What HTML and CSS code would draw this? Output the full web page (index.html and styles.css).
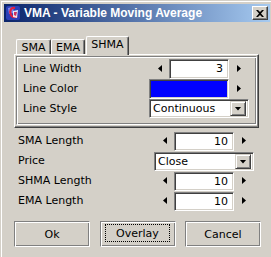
FILE: index.html
```html
<!DOCTYPE html>
<html lang="en">
<head>
  <meta charset="UTF-8" />
  <title>VMA - Variable Moving Average</title>
  <link rel="stylesheet" href="styles.css">
</head>
<body>
  <div class="window">
    <!-- Caption -->
    <div class="titlebar">
      <svg class="app-icon" width="16" height="16" viewBox="0 0 16 16">
        <rect x="1" y="1" width="14" height="14" rx="2" fill="#2b3fb8"/>
        <path d="M3 3 L8 2 L9 8 L4 9 Z" fill="#7a8cf0"/>
        <path d="M10 3 C6 2 4 6 6 10 C7 12 10 13 12 11" fill="none" stroke="#e02040" stroke-width="2.2"/>
        <path d="M8 6 L13 5 L12 13 L8 12 Z" fill="#ffffff" opacity="0.85"/>
        <path d="M9 7 L12 7 L11 11 L9 10 Z" fill="#d03060"/>
      </svg>
      <span class="title">VMA - Variable Moving Average</span>
      <span class="close-btn">
        <svg width="8" height="7" viewBox="0 0 8 7">
          <path d="M0 0 L2 0 L4 2 L6 0 L8 0 L5 3.5 L8 7 L6 7 L4 5 L2 7 L0 7 L3 3.5 Z" fill="#000"/>
        </svg>
      </span>
    </div>

    <div class="content">
      <!-- Tabs -->
      <div class="tabs">
        <div class="tab tab-sma">SMA</div>
        <div class="tab tab-ema">EMA</div>
        <div class="tab tab-shma active">SHMA</div>
      </div>

      <div class="panel">
        <div class="frame">
          <div class="row">
            <span class="label">Line Width</span>
            <div class="spin">
              <span class="arrow-box"><span class="arrow left"></span></span>
              <span class="field num">3</span>
              <span class="arrow-box right-box"><span class="arrow right"></span></span>
            </div>
          </div>
          <div class="row">
            <span class="label">Line Color</span>
            <div class="spin">
              <span class="field swatch"></span>
              <span class="arrow-box right-box"><span class="arrow right"></span></span>
            </div>
          </div>
          <div class="row">
            <span class="label">Line Style</span>
            <div class="combo">
              <span class="combo-text">Continuous</span>
              <span class="combo-btn"><span class="arrow down"></span></span>
            </div>
          </div>
        </div>
      </div>

      <!-- Common params -->
      <div class="params">
        <div class="row">
          <span class="label">SMA Length</span>
          <div class="spin">
            <span class="arrow-box"><span class="arrow left"></span></span>
            <span class="field num">10</span>
            <span class="arrow-box right-box"><span class="arrow right"></span></span>
          </div>
        </div>
        <div class="row">
          <span class="label">Price</span>
          <div class="combo">
            <span class="combo-text">Close</span>
            <span class="combo-btn"><span class="arrow down"></span></span>
          </div>
        </div>
        <div class="row">
          <span class="label">SHMA Length</span>
          <div class="spin">
            <span class="arrow-box"><span class="arrow left"></span></span>
            <span class="field num">10</span>
            <span class="arrow-box right-box"><span class="arrow right"></span></span>
          </div>
        </div>
        <div class="row">
          <span class="label">EMA Length</span>
          <div class="spin">
            <span class="arrow-box"><span class="arrow left"></span></span>
            <span class="field num">10</span>
            <span class="arrow-box right-box"><span class="arrow right"></span></span>
          </div>
        </div>
      </div>

      <div class="buttons">
        <div class="btn">Ok</div>
        <div class="btn focused"><span class="focus">Overlay</span></div>
        <div class="btn">Cancel</div>
      </div>
    </div>
  </div>
</body>
</html>
```

FILE: styles.css
```css
body {
  margin: 0;
  background: #d4d0c8;
  font-family: "DejaVu Sans", sans-serif;
  font-size: 11px;
  color: #000;
}

.window {
  margin: 1px 0 0 1px;
  border-top: 1px solid #fff;
  border-left: 1px solid #fff;
  padding: 2px 1px 0 2px;
  height: 256px;
  box-sizing: border-box;
}

/* caption */
.titlebar {
  height: 18px;
  display: flex;
  align-items: center;
  padding-left: 1px;
  background: linear-gradient(to right, #0a246a, #a6caf0);
  color: #fff;
}

.app-icon {
  flex: none;
}

.title {
  margin-left: 3px;
  font-family: "Liberation Sans", sans-serif;
  font-weight: bold;
  font-size: 12px;
  white-space: nowrap;
}

.close-btn {
  margin-left: auto;
  margin-right: 2px;
  width: 16px;
  height: 14px;
  box-sizing: border-box;
  display: flex;
  align-items: center;
  justify-content: center;
  background: #d4d0c8;
  border: 1px solid;
  border-color: #fff #404040 #404040 #fff;
  box-shadow: inset -1px -1px #808080;
}

.content {
  padding-left: 10px;
}

/* tabs */
.tabs {
  display: flex;
  align-items: flex-end;
  height: 18px;
  margin-top: 14px;
  padding-left: 2px;
  position: relative;
  z-index: 1;
}

.tab {
  height: 15px;
  box-sizing: border-box;
  padding-top: 1px;
  line-height: 13px;
  text-align: center;
  border-top: 1px solid #fff;
  border-left: 1px solid #fff;
  border-right: 1px solid #404040;
  border-radius: 2px 2px 0 0;
  box-shadow: inset -1px 0 #808080;
  background: #d4d0c8;
}

.tab-sma { width: 35px; }
.tab-ema { width: 34px; }

.tab-shma {
  width: 43px;
  margin-left: 1px;
}

.tab.active {
  height: 19px;
  margin-bottom: -1px;
}

.panel {
  width: 245px;
  height: 74px;
  box-sizing: border-box;
  padding: 1px;
  border-top: 1px solid #fff;
  border-left: 1px solid #fff;
  border-right: 1px solid #404040;
  border-bottom: 1px solid #404040;
  box-shadow: inset -1px -1px #808080;
}

.frame {
  height: 69px;
  box-sizing: border-box;
  border: 1px solid;
  border-color: #808080 #fff #fff #808080;
  box-shadow: inset 1px 1px #fff, inset -1px -1px #808080;
  padding: 1px 0 0 1px;
}

/* rows */
.row {
  display: grid;
  grid-template-columns: 131px 100px;
  height: 20px;
  align-items: center;
}

.label {
  padding-left: 5px;
  line-height: 20px;
  padding-top: 1px;
}

.spin {
  display: flex;
  align-items: center;
  height: 20px;
}

.arrow-box {
  width: 20px;
  height: 20px;
  display: flex;
  align-items: center;
  padding-left: 9px;
  box-sizing: border-box;
}

.right-box {
  padding-left: 8px;
}

.arrow {
  display: block;
  background: #000;
}

.arrow.left {
  width: 4px;
  height: 7px;
  clip-path: polygon(100% 0, 0 50%, 100% 100%);
}

.arrow.right {
  width: 4px;
  height: 7px;
  clip-path: polygon(0 0, 100% 50%, 0 100%);
}

.arrow.down {
  width: 7px;
  height: 4px;
  clip-path: polygon(0 0, 100% 0, 50% 100%);
}

.field {
  height: 20px;
  box-sizing: border-box;
  background: #fff;
  border: 1px solid;
  border-color: #808080 #fff #fff #808080;
  box-shadow: inset 1px 1px #404040, inset -1px -1px #d4d0c8;
}

.num {
  width: 60px;
  text-align: right;
  padding-right: 5px;
  line-height: 18px;
}

.swatch {
  width: 80px;
  background: #0000ff;
}

.combo {
  width: 100px;
  height: 19px;
  box-sizing: border-box;
  display: flex;
  align-items: center;
  background: #fff;
  border: 1px solid;
  border-color: #808080 #fff #fff #808080;
  box-shadow: inset 1px 1px #404040, inset -1px -1px #d4d0c8;
  padding: 2px 2px 2px 3px;
}

.combo-text {
  flex: 1;
  line-height: 15px;
}

.combo-btn {
  width: 16px;
  height: 15px;
  box-sizing: border-box;
  display: flex;
  align-items: center;
  justify-content: center;
  background: #d4d0c8;
  border: 1px solid;
  border-color: #d4d0c8 #404040 #404040 #d4d0c8;
  box-shadow: inset 1px 1px #fff, inset -1px -1px #808080;
}

/* lower params */
.params {
  margin: 2px 0 0 -10px;
}

.params .row {
  grid-template-columns: 150px 100px;
}

.params .label {
  padding-left: 14px;
}

.params .spin .field {
  height: 19px;
  margin-top: 1px;
}

.params .combo {
  margin-top: 2px;
}

/* buttons */
.buttons {
  display: flex;
  gap: 9px;
  margin-top: 11px;
}

.btn {
  width: 76px;
  height: 26px;
  box-sizing: border-box;
  display: flex;
  align-items: center;
  justify-content: center;
  border: 1px solid;
  border-color: #808080 #fff #fff #808080;
  box-shadow: inset 1px 1px #fff, inset -1px -1px #808080;
  padding-top: 1px;
}

.btn.focused {
  margin-left: 1px;
  align-items: stretch;
  padding: 2px 5px 4px 4px;
}

.focus {
  flex: 1;
  border: 1px dotted #000;
  display: flex;
  align-items: center;
  justify-content: center;
  padding-top: 1px;
}
```
